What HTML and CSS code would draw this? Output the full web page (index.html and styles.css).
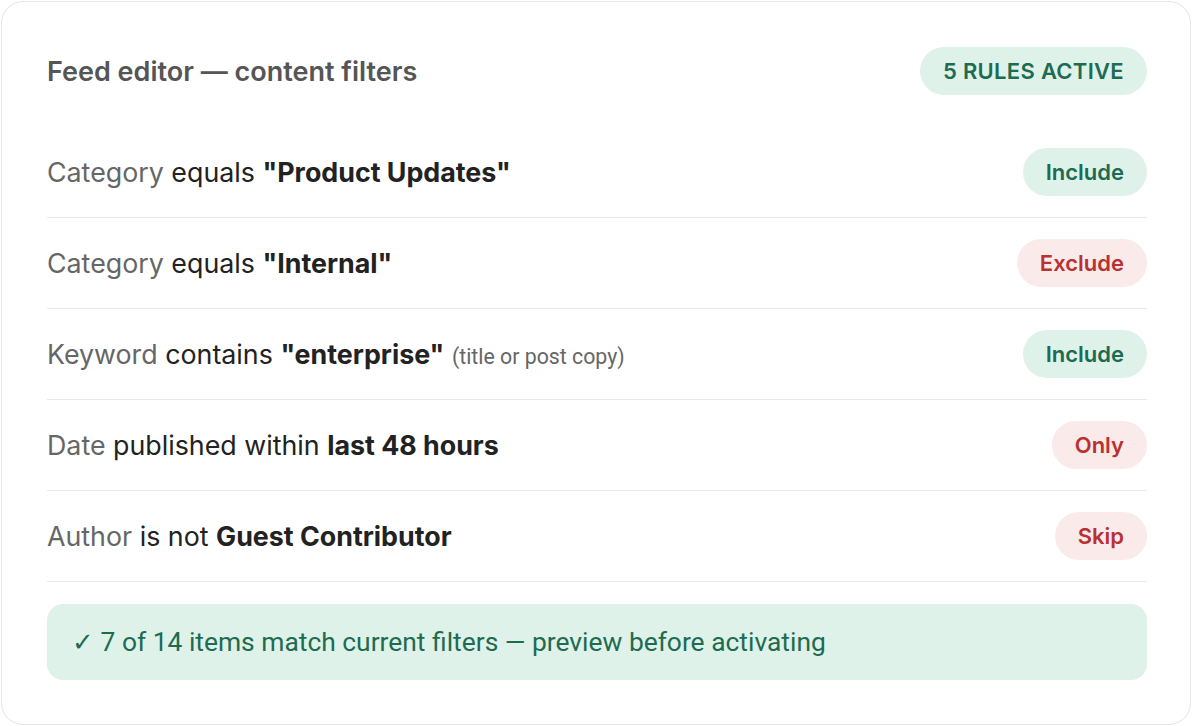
FILE: index.html
```html
<!DOCTYPE html>
<html lang="en">
<head>
    <meta charset="UTF-8">
    <title>Feed editor</title>
    <link rel="stylesheet" href="styles.css">
</head>
<body>
    <div class="card">
        <div class="card-head">
            <h2>Feed editor — content filters</h2>
            <span class="badge">5 RULES ACTIVE</span>
        </div>

        <div class="rule">
            <div class="rule-text"><span class="field">Category</span> equals <b>"Product Updates"</b></div>
            <span class="pill pill-green">Include</span>
        </div>
        <div class="rule">
            <div class="rule-text"><span class="field">Category</span> equals <b>"Internal"</b></div>
            <span class="pill pill-red">Exclude</span>
        </div>
        <div class="rule">
            <div class="rule-text"><span class="field">Keyword</span> contains <b>"enterprise"</b> <small>(title or post copy)</small></div>
            <span class="pill pill-green">Include</span>
        </div>
        <div class="rule">
            <div class="rule-text"><span class="field">Date</span> published within <b>last 48 hours</b></div>
            <span class="pill pill-red">Only</span>
        </div>
        <div class="rule">
            <div class="rule-text"><span class="field">Author</span> is not <b>Guest Contributor</b></div>
            <span class="pill pill-red">Skip</span>
        </div>

        <div class="preview">&#10003; 7 of 14 items match current filters — preview before activating</div>
    </div>
</body>
</html>
```

FILE: styles.css
```css
body {
    font-family: Inter, "Noto Sans", sans-serif;
    margin: 0;
    padding: 1px;
    background-color: #ffffff;
    color: #222;
}
.card {
    height: 724px;
    box-sizing: border-box;
    border: 1px solid #e8e6e1;
    border-radius: 22px;
    padding: 45px 43px 44px 45px;
    display: flex;
    flex-direction: column;
}
.card-head {
    display: flex;
    justify-content: space-between;
    align-items: center;
    flex-shrink: 0;
    height: 48px;
    margin-bottom: 32px;
}
.card-head h2 {
    margin: 0;
    font-size: 27px;
    font-weight: 600;
    color: #555;
}
.badge {
    background-color: #dff2ea;
    color: #1d6b50;
    font-size: 22px;
    font-weight: 600;
    letter-spacing: 0.3px;
    padding: 11px 23px;
    border-radius: 25px;
}
.rule {
    display: flex;
    justify-content: space-between;
    align-items: center;
    flex-shrink: 0;
    height: 90px;
    border-bottom: 1px solid #ebe9e4;
}
.rule-text {
    font-size: 26.8px;
}
.rule-text .field {
    color: #666;
}
.rule-text b {
    font-weight: 700;
}
.rule-text small {
    font-family: Roboto, sans-serif;
    font-size: 21.3px;
    color: #666;
}
.pill {
    font-size: 22px;
    font-weight: 600;
    padding: 11px 23px;
    border-radius: 25px;
}
.pill-green {
    background-color: #dff2ea;
    color: #1d6b50;
}
.pill-red {
    background-color: #fbeaea;
    color: #b83232;
}
.preview {
    margin-top: auto;
    background-color: #dff2ea;
    color: #1d6b50;
    font-family: Roboto, sans-serif;
    font-size: 26.4px;
    padding: 22px 25px 23px;
    border-radius: 16px;
}
```
